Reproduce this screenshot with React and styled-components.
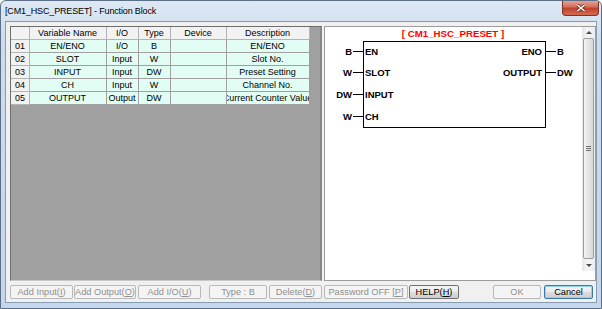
import React from 'react';
import styled, { createGlobalStyle } from 'styled-components';

const GlobalStyle = createGlobalStyle`
  html, body {
    margin: 0;
    padding: 0;
    background: #ffffff;
  }
  body {
    font-family: "Liberation Sans", Arial, sans-serif;
  }
`;

const Window = styled.div`
  width: 602px;
  height: 309px;
  box-sizing: border-box;
  border: 1px solid #5b6f86;
  border-radius: 6px 6px 0 0;
  background: linear-gradient(#dde8f4, #cddced 40px, #c4d7ec);
  padding: 0 4px 5px 4px;
  display: flex;
  flex-direction: column;
  overflow: hidden;
`;

const TitleBar = styled.div`
  height: 20px;
  display: flex;
  align-items: flex-start;
  justify-content: space-between;
  .title {
    margin-top: 5px;
    font-size: 9px;
    letter-spacing: -0.15px;
    color: #000;
  }
`;

const CloseButton = styled.div`
  width: 37px;
  height: 16px;
  margin-top: -1px;
  margin-right: -2px;
  box-sizing: border-box;
  border: 1px solid #7d3328;
  border-top: none;
  border-radius: 0 0 4px 4px;
  background: linear-gradient(#eaa99c, #d4705d 45%, #c0412b 55%, #d66a52);
  display: flex;
  align-items: center;
  justify-content: center;
`;

const Client = styled.div`
  flex: 1;
  border: 1px solid #8a9cb1;
  background: #f0f0f0;
  padding: 4px 0 3px 4px;
  display: flex;
  flex-direction: column;
`;

const Panes = styled.div`
  height: 255px;
  display: flex;
`;

const GridPane = styled.div`
  width: 312px;
  box-sizing: border-box;
  background: #a0a0a0;
  border-top: 1px solid #6e6e6e;
  border-left: 1px solid #6e6e6e;
  border-right: 2px solid #878787;
  border-bottom: 1px solid #c8c8c8;
`;

const Table = styled.table`
  table-layout: fixed;
  border-collapse: collapse;
  width: 298px;
  font-size: 9px;
  color: #000;
  th, td {
    height: 12px;
    padding: 0;
    border: 1px solid #a0a0a0;
    text-align: center;
    white-space: nowrap;
    overflow: hidden;
    line-height: 12px;
  }
  th {
    font-weight: normal;
    background: #f2f2f2;
    border-color: #b4b4b4;
  }
  tr:first-child th {
    border-top: none;
  }
  tr > *:first-child {
    border-left: none;
  }
`;

const Col = styled.col`
  width: ${(p) => p.$w}px;
`;

const NumCell = styled.th`
  && {
    text-align: left;
    padding-left: 4px;
  }
`;

const Cell = styled.td`
  background: #e1fdf4;
`;

const Clip = styled.div`
  display: flex;
  justify-content: center;
  overflow: hidden;
  white-space: nowrap;
`;

const DiagramPane = styled.div`
  flex: 1;
  margin-left: 2px;
  box-sizing: border-box;
  border: 1px solid #9c9c9c;
  background: #ffffff;
  display: flex;
`;

const Canvas = styled.svg`
  flex: 1;
  display: block;
  font-family: "Liberation Sans", Arial, sans-serif;
`;

const ScrollBar = styled.div`
  width: 13px;
  display: flex;
  flex-direction: column;
  background: #ffffff;
  .track {
    height: 244px;
    display: flex;
    flex-direction: column;
    background: linear-gradient(90deg, #e6e6e6, #f4f4f4 40%, #ededed);
  }
  .rest {
    flex: 1;
  }
`;

const Arrow = styled.div`
  height: 11px;
  display: flex;
  align-items: center;
  justify-content: center;
  &::after {
    content: '';
    border-left: 3px solid transparent;
    border-right: 3px solid transparent;
    ${(p) =>
      p.$down
        ? 'border-top: 3px solid #4a4a4a;'
        : 'border-bottom: 3px solid #4a4a4a;'}
  }
`;

const Thumb = styled.div`
  height: 221px;
  margin: 0 1px;
  box-sizing: border-box;
  border: 1px solid #9a9ea4;
  border-radius: 2px;
  background: linear-gradient(90deg, #f4f4f4, #e4e4e4 50%, #d8d8d8);
  display: flex;
  align-items: center;
  justify-content: center;
  .grip {
    width: 5px;
    height: 6px;
    background: repeating-linear-gradient(
      #6f6f6f 0,
      #6f6f6f 1px,
      transparent 1px,
      transparent 2px
    );
  }
`;

const ButtonRow = styled.div`
  margin-top: 4px;
  height: 14px;
  display: flex;
`;

const Button = styled.div`
  width: ${(p) => p.$w}px;
  margin-left: ${(p) => p.$ml || 0}px;
  height: 14px;
  box-sizing: border-box;
  border: 1px solid ${(p) => (p.$default ? '#3d7bad' : p.$enabled ? '#707070' : '#b8b8b8')};
  box-shadow: ${(p) => (p.$default ? 'inset 0 0 0 1px #8fd0f4' : 'none')};
  border-radius: 2px;
  background: ${(p) =>
    p.$enabled
      ? 'linear-gradient(#f4f4f4, #ebebeb 50%, #dddddd 51%, #cfcfcf)'
      : '#f4f4f4'};
  color: ${(p) => (p.$enabled ? '#000000' : '#8f8f8f')};
  font-size: 9.2px;
  line-height: 12px;
  text-align: center;
  white-space: nowrap;
  overflow: hidden;
`;

const rows = [
  ['01', 'EN/ENO', 'I/O', 'B', '', 'EN/ENO'],
  ['02', 'SLOT', 'Input', 'W', '', 'Slot No.'],
  ['03', 'INPUT', 'Input', 'DW', '', 'Preset Setting'],
  ['04', 'CH', 'Input', 'W', '', 'Channel No.'],
  ['05', 'OUTPUT', 'Output', 'DW', '', 'Current Counter Value'],
];

const inputs = [
  ['B', 'EN'],
  ['W', 'SLOT'],
  ['DW', 'INPUT'],
  ['W', 'CH'],
];
const outputs = [
  ['ENO', 'B'],
  ['OUTPUT', 'DW'],
];
const pinY = [24.5, 45.5, 67.5, 89.5];

function FunctionBlock() {
  return (
    <Canvas viewBox="0 0 257 253">
      <text
        x="128"
        y="10"
        textAnchor="middle"
        fill="#ff0000"
        fontSize="9.7"
        fontWeight="bold"
      >
        [ CM1_HSC_PRESET ]
      </text>
      <rect x="38.5" y="14.5" width="182" height="86" fill="none" stroke="#000" />
      {inputs.map(([type, name], i) => (
        <g key={name} fontSize="9.5" fontWeight="bold" fill="#000">
          <text x="27" y={pinY[i] + 3.5} textAnchor="end">
            {type}
          </text>
          <line x1="28" x2="38" y1={pinY[i]} y2={pinY[i]} stroke="#000" />
          <text x="40" y={pinY[i] + 3.5}>
            {name}
          </text>
        </g>
      ))}
      {outputs.map(([name, type], i) => (
        <g key={name} fontSize="9.5" fontWeight="bold" fill="#000">
          <text x="217" y={pinY[i] + 3.5} textAnchor="end">
            {name}
          </text>
          <line x1="221" x2="231" y1={pinY[i]} y2={pinY[i]} stroke="#000" />
          <text x="232" y={pinY[i] + 3.5}>
            {type}
          </text>
        </g>
      ))}
    </Canvas>
  );
}

export default function App() {
  return (
    <>
      <GlobalStyle />
      <Window>
        <TitleBar>
          <span className="title">[CM1_HSC_PRESET] - Function Block</span>
          <CloseButton>
            <svg width="10" height="8" viewBox="0 0 10 8">
              <path d="M1.5 1 L8.5 7 M8.5 1 L1.5 7" stroke="#6b2a20" strokeWidth="3" />
              <path d="M1.5 1 L8.5 7 M8.5 1 L1.5 7" stroke="#ffffff" strokeWidth="1.6" />
            </svg>
          </CloseButton>
        </TitleBar>
        <Client>
          <Panes>
            <GridPane>
              <Table>
                <colgroup>
                  <Col $w={18} />
                  <Col $w={77} />
                  <Col $w={32} />
                  <Col $w={32} />
                  <Col $w={56} />
                  <Col $w={83} />
                </colgroup>
                <thead>
                  <tr>
                    <th></th>
                    <th>Variable Name</th>
                    <th>I/O</th>
                    <th>Type</th>
                    <th>Device</th>
                    <th>Description</th>
                  </tr>
                </thead>
                <tbody>
                  {rows.map((r) => (
                    <tr key={r[0]}>
                      <NumCell>{r[0]}</NumCell>
                      {r.slice(1).map((v, i) => (
                        <Cell key={i}>
                          <Clip>{v}</Clip>
                        </Cell>
                      ))}
                    </tr>
                  ))}
                </tbody>
              </Table>
            </GridPane>
            <DiagramPane>
              <FunctionBlock />
              <ScrollBar>
                <div className="track">
                  <Arrow />
                  <Thumb>
                    <div className="grip" />
                  </Thumb>
                  <div className="rest" />
                  <Arrow $down />
                </div>
              </ScrollBar>
            </DiagramPane>
          </Panes>
          <ButtonRow>
            <Button $w={63}>
              Add Input(<u>I</u>)
            </Button>
            <Button $w={62} $ml={1}>
              Add Output(<u>O</u>)
            </Button>
            <Button $w={63} $ml={2}>
              Add I/O(<u>U</u>)
            </Button>
            <Button $w={58} $ml={8}>
              Type : B
            </Button>
            <Button $w={53} $ml={2}>
              Delete(<u>D</u>)
            </Button>
            <Button $w={84} $ml={2}>
              Password OFF [<u>P</u>]
            </Button>
            <Button $w={50} $ml={1} $enabled>
              HELP(<u>H</u>)
            </Button>
            <Button $w={48} $ml={34}>
              OK
            </Button>
            <Button $w={49} $ml={3} $enabled $default>
              Cancel
            </Button>
          </ButtonRow>
        </Client>
      </Window>
    </>
  );
}
